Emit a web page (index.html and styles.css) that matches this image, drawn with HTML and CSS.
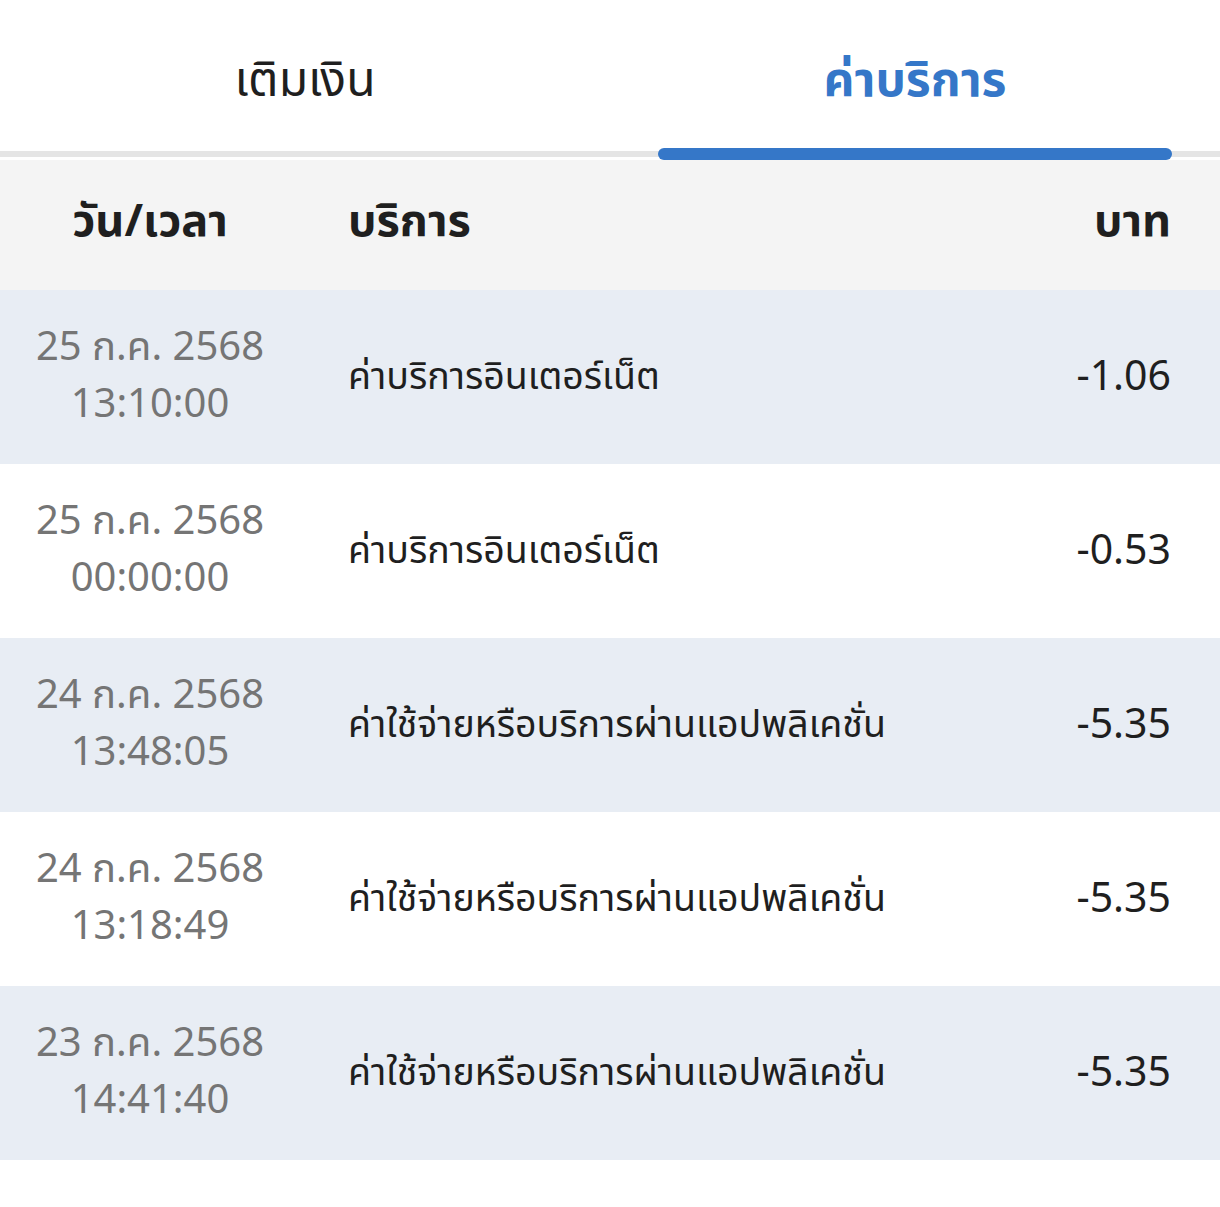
FILE: index.html
```html
<!DOCTYPE html>
<html lang="th">
<head>
    <meta charset="UTF-8">
    <meta name="viewport" content="width=device-width, initial-scale=1.0">
    <title>ค่าบริการ</title>
    <link rel="stylesheet" href="styles.css">
</head>
<body>
    <div class="tabs">
        <div class="tab">เติมเงิน</div>
        <div class="tab active">ค่าบริการ</div>
    </div>
    <div class="tabs-line"></div>

    <div class="table">
        <div class="row head">
            <div class="col-date">วัน/เวลา</div>
            <div class="col-service">บริการ</div>
            <div class="col-amount">บาท</div>
        </div>

        <div class="row shade">
            <div class="col-date">25 ก.ค. 2568<br>13:10:00</div>
            <div class="col-service">ค่าบริการอินเตอร์เน็ต</div>
            <div class="col-amount">-1.06</div>
        </div>
        <div class="row">
            <div class="col-date">25 ก.ค. 2568<br>00:00:00</div>
            <div class="col-service">ค่าบริการอินเตอร์เน็ต</div>
            <div class="col-amount">-0.53</div>
        </div>
        <div class="row shade">
            <div class="col-date">24 ก.ค. 2568<br>13:48:05</div>
            <div class="col-service">ค่าใช้จ่ายหรือบริการผ่านแอปพลิเคชั่น</div>
            <div class="col-amount">-5.35</div>
        </div>
        <div class="row">
            <div class="col-date">24 ก.ค. 2568<br>13:18:49</div>
            <div class="col-service">ค่าใช้จ่ายหรือบริการผ่านแอปพลิเคชั่น</div>
            <div class="col-amount">-5.35</div>
        </div>
        <div class="row shade">
            <div class="col-date">23 ก.ค. 2568<br>14:41:40</div>
            <div class="col-service">ค่าใช้จ่ายหรือบริการผ่านแอปพลิเคชั่น</div>
            <div class="col-amount">-5.35</div>
        </div>
    </div>
</body>
</html>
```

FILE: styles.css
```css
body {
    margin: 0;
    background: #fff;
    font-family: "Noto Sans Thai", "Noto Sans Thai UI", "Loma", "Garuda", "Noto Sans", sans-serif;
    color: #1f1f1f;
}

.tabs {
    display: grid;
    grid-template-columns: 1fr 1fr;
    height: 151px;
}

.tab {
    position: relative;
    display: flex;
    justify-content: center;
    align-items: center;
    padding-top: 12px;
    font-size: 48px;
    color: #1f1f1f;
}

.tab.active {
    color: #3577c8;
    font-weight: bold;
}

/* blue indicator sits over the grey line */
.tab.active::after {
    content: "";
    position: absolute;
    left: 48px;
    right: 48px;
    bottom: -9px;
    height: 12px;
    border-radius: 6px;
    background: #3577c8;
    z-index: 1;
}

.tabs-line {
    height: 6px;
    margin-bottom: 3px;
    background: #e5e5e5;
}

.table {
    display: flex;
    flex-direction: column;
}

.row {
    display: grid;
    grid-template-columns: 300px 1fr auto;
    column-gap: 48px;
    align-items: center;
    height: 174px;
    padding-right: 49px;
    box-sizing: border-box;
}

.row.shade {
    background: #e8edf4;
}

.row.head {
    height: 130px;
    padding-bottom: 6px;
    background: #f4f4f4;
    font-weight: bold;
    color: #1f1f1f;
}

.col-date {
    text-align: center;
    font-size: 40px;
    line-height: 57px;
    color: #757575;
}

.head .col-date {
    font-size: 45px;
    color: #1f1f1f;
}

.col-service {
    font-size: 37.5px;
    color: #1f1f1f;
}

.head .col-service {
    font-size: 45px;
}

.col-amount {
    text-align: right;
    font-size: 41px;
    color: #1f1f1f;
}

.head .col-amount {
    font-size: 45px;
}
```
